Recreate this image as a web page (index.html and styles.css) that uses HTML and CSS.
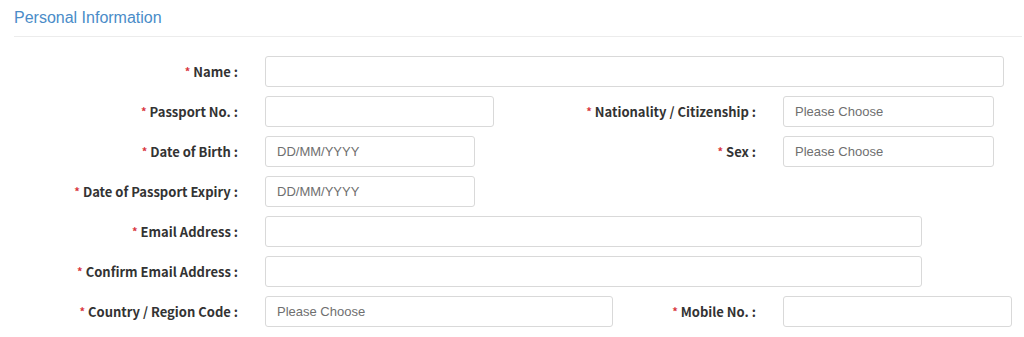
FILE: index.html
```html
<!DOCTYPE html>
<html lang="en">
<head>
<meta charset="utf-8">
<title>Personal Information</title>
<link rel="stylesheet" href="styles.css">
</head>
<body>
<div class="section">
  <h2 class="section-title">Personal Information</h2>
  <div class="form">
    <div class="row">
      <div class="pair">
        <label class="label"><span class="req">*</span>Name :</label>
        <input class="input w-name" type="text">
      </div>
    </div>
    <div class="row">
      <div class="pair">
        <label class="label"><span class="req">*</span>Passport No. :</label>
        <input class="input w-passport" type="text">
      </div>
      <div class="pair pair-right">
        <label class="label-r"><span class="req">*</span>Nationality / Citizenship :</label>
        <div class="field-r"><input class="input w-select" type="text" placeholder="Please Choose"></div>
      </div>
    </div>
    <div class="row">
      <div class="pair">
        <label class="label"><span class="req">*</span>Date of Birth :</label>
        <input class="input w-date" type="text" placeholder="DD/MM/YYYY">
      </div>
      <div class="pair pair-right">
        <label class="label-r"><span class="req">*</span>Sex :</label>
        <div class="field-r"><input class="input w-select" type="text" placeholder="Please Choose"></div>
      </div>
    </div>
    <div class="row">
      <div class="pair">
        <label class="label"><span class="req">*</span>Date of Passport Expiry :</label>
        <input class="input w-date" type="text" placeholder="DD/MM/YYYY">
      </div>
    </div>
    <div class="row">
      <div class="pair">
        <label class="label"><span class="req">*</span>Email Address :</label>
        <input class="input w-email" type="text">
      </div>
    </div>
    <div class="row">
      <div class="pair">
        <label class="label"><span class="req">*</span>Confirm Email Address :</label>
        <input class="input w-email" type="text">
      </div>
    </div>
    <div class="row">
      <div class="pair">
        <label class="label"><span class="req">*</span>Country / Region Code :</label>
        <input class="input w-country" type="text" placeholder="Please Choose">
      </div>
      <div class="pair pair-right">
        <label class="label-r"><span class="req">*</span>Mobile No. :</label>
        <div class="field-r"><input class="input w-mobile" type="text"></div>
      </div>
    </div>
  </div>
</div>
</body>
</html>
```
FILE: styles.css
```css
* { box-sizing: border-box; }
html, body { margin: 0; padding: 0; background: #fff; }
body { font-family: "Liberation Sans", Arial, sans-serif; }

.section { padding: 0 2px 0 14px; }

.section-title {
  margin: 0;
  padding: 7px 0 7px;
  font-size: 16px;
  line-height: 22px;
  font-weight: normal;
  color: #4a8cc8;
  border-bottom: 1px solid #ececec;
}

.form {
  margin: 0 -2px 0 -14px;
  padding-top: 19px;
  display: flex;
  flex-direction: column;
  gap: 9px;
}

.row {
  display: flex;
  align-items: center;
  height: 31px;
}

.pair {
  display: flex;
  align-items: center;
  gap: 27px;
}

.pair-right { margin-left: auto; }

.label, .label-r {
  font-family: "Noto Sans CJK KR", "Noto Sans", sans-serif;
  font-weight: bold;
  font-size: 13px;
  color: #333;
  white-space: nowrap;
}

.label { width: 238px; text-align: right; }

.req {
  color: #d9363e;
  font-size: 11px;
  margin-right: 3px;
  position: relative;
  top: -1px;
}

.field-r { width: 241px; }

.input {
  height: 31px;
  border: 1px solid #d9d9d9;
  border-radius: 3px;
  padding: 0 11px;
  font-family: "Liberation Sans", Arial, sans-serif;
  font-size: 13px;
  color: #333;
  background: #fff;
  outline: none;
}
.input::placeholder { color: #6f6f6f; }

.w-name { width: 739px; }
.w-passport { width: 229px; }
.w-date { width: 210px; }
.w-email { width: 657px; }
.w-country { width: 348px; }
.w-select { width: 211px; }
.w-mobile { width: 229px; }
```
